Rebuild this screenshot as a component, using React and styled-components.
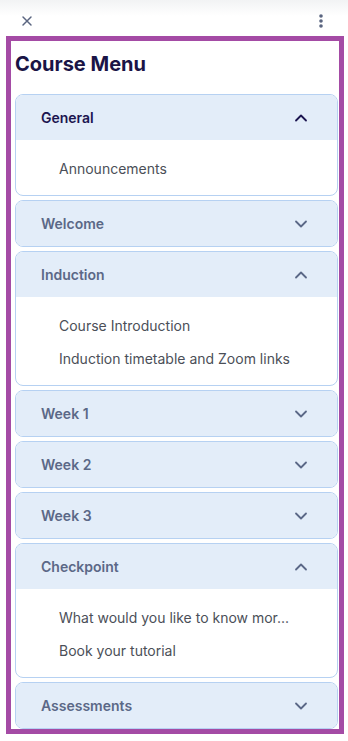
import React from 'react'
import styled, { createGlobalStyle } from 'styled-components'

const GlobalStyle = createGlobalStyle`
  body {
    margin: 0;
    background: #ffffff;
    font-family: Inter, "Noto Sans", sans-serif;
  }
`

const sections = [
  { id: 'general', title: 'General', current: true, open: true, items: ['Announcements'] },
  { id: 'welcome', title: 'Welcome' },
  { id: 'induction', title: 'Induction', open: true, items: ['Course Introduction', 'Induction timetable and Zoom links'] },
  { id: 'week1', title: 'Week 1' },
  { id: 'week2', title: 'Week 2' },
  { id: 'week3', title: 'Week 3' },
  { id: 'checkpoint', title: 'Checkpoint', open: true, items: ['What would you like to know mor...', 'Book your tutorial'] },
  { id: 'assessments', title: 'Assessments' },
]

const TopBar = styled.div`
  height: 36px;
  display: flex;
  align-items: center;
  justify-content: space-between;
  padding: 6px 19px 0 19px;
  box-sizing: border-box;
  background: linear-gradient(#f2f3f4, #ffffff 16px);
`

const IconButton = styled.button`
  width: 16px;
  height: 16px;
  padding: 0;
  border: 0;
  background: none;
  display: flex;
  align-items: center;
  justify-content: center;
  color: #5a6580;
`

const Frame = styled.div`
  margin: 0 4px 0 6px;
  height: 698px;
  box-sizing: border-box;
  border: 5px solid #a44ba5;
  padding: 9px 1px 0 4px;
  overflow: hidden;
`

const Title = styled.h1`
  margin: 0 0 16px;
  font-size: 20px;
  line-height: 28px;
  font-weight: 700;
  color: #1a1446;
`

const List = styled.div`
  display: flex;
  flex-direction: column;
  gap: 4px;
`

const Section = styled.div`
  border: 1px solid #b6d1f2;
  border-radius: 8px;
  overflow: hidden;
  background: #ffffff;
`

const Header = styled.div`
  height: 45px;
  display: flex;
  align-items: center;
  justify-content: space-between;
  padding: 0 26px 0 25px;
  background: #e3edf9;
  font-size: 14px;
  font-weight: 600;
  color: ${p => (p.$current ? '#1c1550' : '#5b6887')};
`

const Body = styled.div`
  display: flex;
  flex-direction: column;
  gap: 13px;
  padding: 19px 40px 16px 43px;
`

const Item = styled.div`
  font-size: 14px;
  line-height: 20px;
  color: #4b4f58;
  white-space: nowrap;
`

const Chevron = ({ up }) => (
  <svg width="20" height="20" viewBox="0 0 24 24" fill="none" stroke="currentColor" strokeWidth="2.2" strokeLinecap="round" strokeLinejoin="round">
    <path d={up ? 'M6 15l6-6 6 6' : 'M6 9l6 6 6-6'} />
  </svg>
)

function App() {
  return (
    <>
      <GlobalStyle />
      <TopBar>
        <IconButton aria-label="Close">
          <svg width="16" height="16" viewBox="0 0 24 24" fill="none" stroke="currentColor" strokeWidth="2.2" strokeLinecap="round">
            <path d="M6 6l12 12M18 6L6 18" />
          </svg>
        </IconButton>
        <IconButton aria-label="More">
          <svg width="16" height="16" viewBox="0 0 16 16" fill="currentColor">
            <circle cx="8" cy="3" r="1.8" />
            <circle cx="8" cy="8" r="1.8" />
            <circle cx="8" cy="13" r="1.8" />
          </svg>
        </IconButton>
      </TopBar>
      <Frame>
        <Title>Course Menu</Title>
        <List>
          {sections.map(s => (
            <Section key={s.id}>
              <Header $current={s.current}>
                <span>{s.title}</span>
                <Chevron up={s.open} />
              </Header>
              {s.open &&
                <Body>
                  {s.items.map(item => <Item key={item}>{item}</Item>)}
                </Body>}
            </Section>
          ))}
        </List>
      </Frame>
    </>
  )
}

export default App
